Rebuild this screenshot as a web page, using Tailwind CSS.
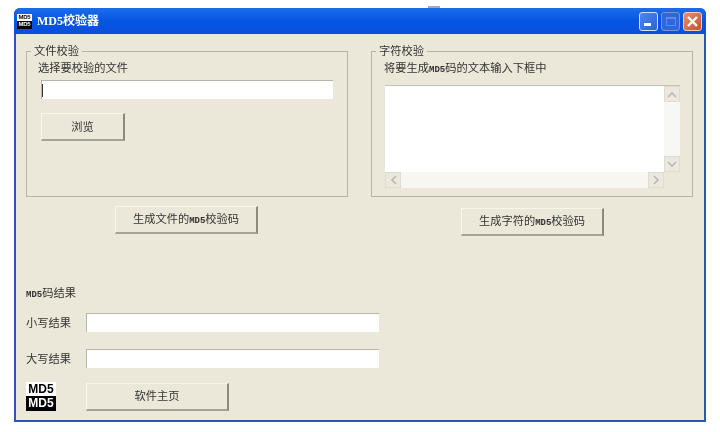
<!DOCTYPE html>
<html lang="zh-CN">
<head>
    <meta charset="UTF-8">
    <script src="https://cdn.jsdelivr.net/npm/@tailwindcss/browser@4"></script>
    <title>MD5校验器</title>
</head>
<body class="relative w-[720px] h-[432px] overflow-hidden bg-white pt-[8px] pl-[14px] font-['Liberation_Sans','Noto_Sans_CJK_SC',sans-serif] text-[11.25px] leading-[14px] text-[#333]">

<!-- small mark above the window edge -->
<div class="absolute left-[428px] top-[6px] w-[12px] h-[2px] bg-[#5a7398]/60"></div>

<div class="w-[692px] h-[414px] flex flex-col rounded-t-[6px] overflow-hidden bg-[#2f55b4] blur-[0.35px]">

    <!-- Title bar -->
    <div class="h-[26px] shrink-0 flex items-center pl-[3px] pr-[4px] bg-gradient-to-b from-[#1c6cea] via-[#0555e3] to-[#0a4fd8]">
        <div class="w-[15px] h-[15px] flex flex-col bg-black font-bold text-[6px] leading-[7px] tracking-[-0.3px] text-center overflow-hidden">
            <span class="bg-white text-black">MD5</span>
            <span class="text-white">MD5</span>
        </div>
        <span class="ml-[5px] font-bold text-[12px] text-white font-['Liberation_Serif','Noto_Sans_CJK_SC',serif]">MD5校验器</span>

        <!-- Window buttons -->
        <div class="ml-auto flex gap-[3px]">
            <div class="w-[19px] h-[19px] rounded-[3px] border border-[#cfe0f8] bg-gradient-to-br from-[#4f86ec] to-[#2a62d4] flex items-end pl-[4px] pb-[4px]">
                <div class="w-[7px] h-[3px] bg-white"></div>
            </div>
            <div class="w-[19px] h-[19px] rounded-[3px] border border-[#6f97e6] bg-[#2f66da] flex items-center justify-center">
                <div class="w-[10px] h-[9px] border border-[#5f8be0] border-t-2"></div>
            </div>
            <div class="w-[19px] h-[19px] rounded-[3px] border border-[#f0d0c0] bg-gradient-to-br from-[#e8906a] to-[#c9502a] flex items-center justify-center">
                <svg width="13" height="13" viewBox="0 0 13 13"><path d="M2 2 L11 11 M11 2 L2 11" stroke="#fff" stroke-width="2.4" fill="none"/></svg>
            </div>
        </div>
    </div>

    <!-- Client area -->
    <div class="mx-[2px] mb-[2px] h-[386px] bg-[#ebe8d9] pl-[10px] pt-[10px]">

        <div class="flex gap-[23px] items-start">
            <!-- 文件校验 -->
            <div class="w-[322px]">
                <fieldset class="h-[153px] border border-[#b6b3a5] pl-[11px]">
                    <legend class="-ml-[7px] px-[3px] h-[14px]">文件校验</legend>
                    <p class="mt-[3px]">选择要校验的文件</p>
                    <div class="ml-[3px] mt-[5px] w-[292px] h-[19px] bg-white border-t border-l border-[#b8b5a8] flex items-center">
                        <div class="w-px h-[13px] bg-[#333]"></div>
                    </div>
                    <button class="ml-[3px] mt-[14px] w-[84px] h-[28px] bg-[#ebe8d9] border-t border-l border-[#f8f6ec] border-r-2 border-b-2 border-r-[#8d8a7c] border-b-[#a5a294]">浏览</button>
                </fieldset>
                <div class="pl-[89px] pt-[9px]">
                    <button class="w-[143px] h-[28px] bg-[#ebe8d9] border-t border-l border-[#f8f6ec] border-r-2 border-b-2 border-r-[#8d8a7c] border-b-[#a5a294]">生成文件的<span class="font-['Liberation_Mono'] text-[9px] font-bold">MD5</span>校验码</button>
                </div>
            </div>

            <!-- 字符校验 -->
            <div class="w-[322px]">
                <fieldset class="h-[153px] border border-[#b6b3a5] pl-[12px]">
                    <legend class="-ml-[8px] px-[3px] h-[14px]">字符校验</legend>
                    <p class="mt-[3px]">将要生成<span class="font-['Liberation_Mono'] text-[9px] font-bold">MD5</span>码的文本输入下框中</p>
                    <div class="ml-[1px] mt-[8px] w-[295px] h-[103px] flex flex-col border-t border-[#c4c1b4]">
                        <div class="flex flex-1 min-h-0">
                            <div class="flex-1 bg-white"></div>
                            <div class="w-[16px] flex flex-col justify-between bg-[#f7f7f5]">
                                <div class="h-[16px] bg-[#ece9dc] border border-[#dedbd0] flex items-center justify-center">
                                    <svg width="10" height="7" viewBox="0 0 10 7"><path d="M1 6 L5 2 L9 6" stroke="#b5b8c0" stroke-width="1.6" fill="none"/></svg>
                                </div>
                                <div class="h-[16px] bg-[#ece9dc] border border-[#dedbd0] flex items-center justify-center">
                                    <svg width="10" height="7" viewBox="0 0 10 7"><path d="M1 1 L5 5 L9 1" stroke="#b5b8c0" stroke-width="1.6" fill="none"/></svg>
                                </div>
                            </div>
                        </div>
                        <div class="h-[16px] shrink-0 flex">
                            <div class="flex-1 flex justify-between bg-[#f7f6f0]">
                                <div class="w-[16px] bg-[#ece9dc] border border-[#dedbd0] flex items-center justify-center">
                                    <svg width="7" height="10" viewBox="0 0 7 10"><path d="M6 1 L2 5 L6 9" stroke="#b5b8c0" stroke-width="1.6" fill="none"/></svg>
                                </div>
                                <div class="w-[16px] bg-[#ece9dc] border border-[#dedbd0] flex items-center justify-center">
                                    <svg width="7" height="10" viewBox="0 0 7 10"><path d="M1 1 L5 5 L1 9" stroke="#b5b8c0" stroke-width="1.6" fill="none"/></svg>
                                </div>
                            </div>
                            <div class="w-[16px] bg-[#ebe8d9]"></div>
                        </div>
                    </div>
                </fieldset>
                <div class="pl-[90px] pt-[11px]">
                    <button class="w-[143px] h-[28px] bg-[#ebe8d9] border-t border-l border-[#f8f6ec] border-r-2 border-b-2 border-r-[#8d8a7c] border-b-[#a5a294]">生成字符的<span class="font-['Liberation_Mono'] text-[9px] font-bold">MD5</span>校验码</button>
                </div>
            </div>
        </div>

        <!-- MD5 结果 -->
        <p class="mt-[50px]"><span class="font-['Liberation_Mono'] text-[9px] font-bold">MD5</span>码结果</p>

        <div class="mt-[11px] flex items-center">
            <span class="w-[60px]">小写结果</span>
            <div class="w-[293px] h-[19px] bg-white border-t border-l border-[#b8b5a8]"></div>
        </div>
        <div class="mt-[17px] flex items-center">
            <span class="w-[60px]">大写结果</span>
            <div class="w-[293px] h-[19px] bg-white border-t border-l border-[#b8b5a8]"></div>
        </div>

        <div class="mt-[14px] flex items-center">
            <div class="w-[30px] h-[29px] mr-[30px] flex flex-col bg-black font-['Liberation_Sans'] font-bold text-[12px] leading-[14px] text-center">
                <span class="bg-white text-black">MD5</span>
                <span class="text-white">MD5</span>
            </div>
            <button class="w-[143px] h-[28px] bg-[#ebe8d9] border-t border-l border-[#f8f6ec] border-r-2 border-b-2 border-r-[#8d8a7c] border-b-[#a5a294]">软件主页</button>
        </div>
    </div>
</div>

</body>
</html>
